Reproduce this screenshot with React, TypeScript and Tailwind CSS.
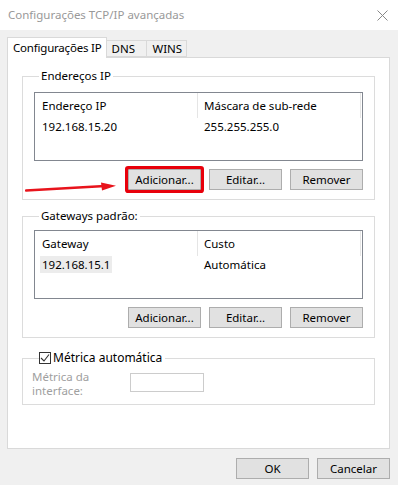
import React from "react";

const FONT = "font-['Segoe_UI','Noto_Sans',sans-serif]";

function Btn({ label, marked }: { label: string; marked?: boolean }) {
  return (
    <button
      className={`h-[21px] w-[73px] border border-[#adadad] bg-[#e1e1e1] text-[11.5px] leading-none text-black ${
        marked ? "rounded-[1px] ring-[3px] ring-[#e8000b]" : ""
      }`}
    >
      {label}
    </button>
  );
}

type Row = { a: string; b: string; selected?: boolean };

function ListBox({ head, rows }: { head: [string, string]; rows: Row[] }) {
  return (
    <div className="h-[69px] border border-[#828790] bg-white">
      <div className="flex h-[25px]">
        <div className="flex w-[163px] items-center border-r border-[#e5e5e5] pl-[7px]">{head[0]}</div>
        <div className="flex w-[163px] items-center border-r border-[#e5e5e5] pl-[6px]">{head[1]}</div>
      </div>
      {rows.map((r) => (
        <div key={r.a} className="flex h-[17px] items-center">
          <div className="w-[163px] pl-[5px]">
            <span className={`inline-block px-[2px] leading-[17px] ${r.selected ? "bg-[#ececec]" : ""}`}>{r.a}</span>
          </div>
          <div className="pl-[6px]">{r.b}</div>
        </div>
      ))}
    </div>
  );
}

function Group({ title, children, extra }: { title: React.ReactNode; children: React.ReactNode; extra?: React.ReactNode }) {
  return (
    <fieldset className="relative border border-[#dcdcdc] px-[11px] pb-[9px]">
      <legend className="ml-[5px] px-[2px] leading-[16px]">{title}</legend>
      {children}
      {extra}
    </fieldset>
  );
}

export default function App() {
  return (
    <div className={`flex h-[485px] w-[398px] flex-col bg-[#f0f0f0] text-[11.5px] text-black ${FONT}`}>
      <div className="flex h-[30px] shrink-0 items-center justify-between bg-white pl-[8px] pr-[10px]">
        <span className="text-[11.5px] text-[#999]">Configurações TCP/IP avançadas</span>
        <svg width="11" height="11" viewBox="0 0 11 11" className="text-[#888]">
          <path d="M0.5 0.5L10.5 10.5M10.5 0.5L0.5 10.5" stroke="currentColor" strokeWidth="1" />
        </svg>
      </div>

      <div className="flex flex-1 flex-col px-[7px] pt-[7px]">
        <div className="flex h-[20px] items-end whitespace-nowrap">
          <div className="relative z-10 -mb-px flex h-[21px] items-center border border-b-0 border-[#d9d9d9] bg-white pl-[5px] pr-[4px] tracking-[-0.2px]">
            Configurações IP
          </div>
          <div className="flex h-[17px] w-[40px] items-center border border-l-0 border-[#d9d9d9] bg-[#f0f0f0] pl-[5px] leading-none">
            DNS
          </div>
          <div className="flex h-[17px] w-[40px] items-center border border-l-0 border-[#d9d9d9] bg-[#f0f0f0] pl-[6px] leading-none">
            WINS
          </div>
        </div>

        <div className="flex h-[392px] w-[383px] flex-col gap-[8px] border border-[#d9d9d9] bg-white px-[14px] pt-[10px]">
          <Group
            title="Endereços IP"
            extra={
              <svg width="92" height="12" viewBox="0 0 92 12" className="absolute left-[2px] top-[97px]">
                <path d="M1 9.5L80 5" stroke="#e8141c" strokeWidth="2.5" strokeLinecap="round" />
                <path d="M76 1.5L91 4.8L77 9.5Z" fill="#e8141c" />
              </svg>
            }
          >
            <div className="mt-[8px]">
              <ListBox head={["Endereço IP", "Máscara de sub-rede"]} rows={[{ a: "192.168.15.20", b: "255.255.255.0" }]} />
            </div>
            <div className="mt-[8px] flex justify-end gap-[8px]">
              <Btn label="Adicionar..." marked />
              <Btn label="Editar..." />
              <Btn label="Remover" />
            </div>
          </Group>

          <Group title="Gateways padrão:">
            <div className="mt-[6px]">
              <ListBox head={["Gateway", "Custo"]} rows={[{ a: "192.168.15.1", b: "Automática", selected: true }]} />
            </div>
            <div className="mt-[8px] flex justify-end gap-[8px]">
              <Btn label="Adicionar..." />
              <Btn label="Editar..." />
              <Btn label="Remover" />
            </div>
          </Group>

          <fieldset className="mt-[4px] border border-[#dcdcdc] pb-[6px] pl-[9px]">
            <legend className="ml-[7px] flex items-center gap-[2px] pr-[3px] leading-[16px]">
              <span className="flex h-[12px] w-[12px] items-center justify-center border border-[#333] bg-white">
                <svg width="10" height="10" viewBox="0 0 10 10">
                  <path d="M1 5L4 8L9 1.5" stroke="#333" strokeWidth="1.1" fill="none" />
                </svg>
              </span>
              <span className="text-[12px]">Métrica automática</span>
            </legend>
            <div className="flex items-start pt-[4px]">
              <div className="flex w-[98px] flex-col text-[#a0a0a0]">
                <span className="leading-[14px]">Métrica da</span>
                <span className="leading-[14px]">interface:</span>
              </div>
              <div className="mt-[3px] h-[19px] w-[74px] border border-[#cccccc] bg-white" />
            </div>
          </fieldset>
        </div>

        <div className="flex justify-end gap-[8px] pr-[1px] pt-[9px]">
          <button className="h-[21px] w-[73px] border border-[#adadad] bg-[#e1e1e1] text-[11.5px] leading-none">OK</button>
          <button className="h-[21px] w-[73px] border border-[#adadad] bg-[#e1e1e1] text-[11.5px] leading-none">Cancelar</button>
        </div>
      </div>
    </div>
  );
}
